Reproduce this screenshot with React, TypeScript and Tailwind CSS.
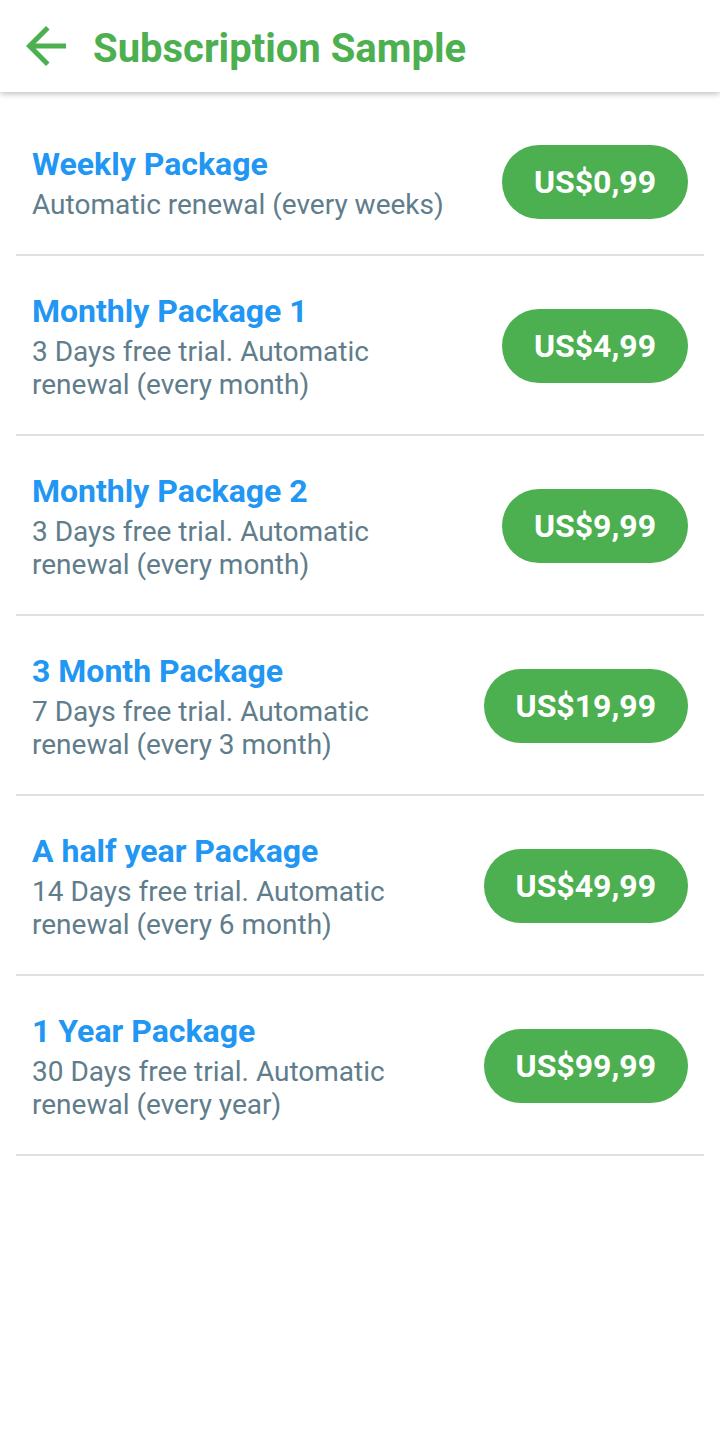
const packages = [
  {
    name: "Weekly Package",
    description: "Automatic renewal (every weeks)",
    price: "US$0,99",
  },
  {
    name: "Monthly Package 1",
    description: "3 Days free trial. Automatic renewal (every month)",
    price: "US$4,99",
  },
  {
    name: "Monthly Package 2",
    description: "3 Days free trial. Automatic renewal (every month)",
    price: "US$9,99",
  },
  {
    name: "3 Month Package",
    description: "7 Days free trial. Automatic renewal (every 3 month)",
    price: "US$19,99",
  },
  {
    name: "A half year Package",
    description: "14 Days free trial. Automatic renewal (every 6 month)",
    price: "US$49,99",
  },
  {
    name: "1 Year Package",
    description: "30 Days free trial. Automatic renewal (every year)",
    price: "US$99,99",
  },
];

function BackArrow() {
  return (
    <svg viewBox="0 0 24 24" className="w-[60px] h-[60px]" fill="#4CAF50">
      <path d="M20 11H7.83l5.59-5.59L12 4l-8 8 8 8 1.41-1.41L7.83 13H20v-2z" />
    </svg>
  );
}

export default function App() {
  return (
    <div
      className="min-h-[1440px] w-[720px] bg-white"
      style={{ fontFamily: "Roboto, 'Noto Sans', sans-serif" }}
    >
      <header className="relative z-10 h-[92px] flex items-center pl-4 bg-white shadow-[0_2px_6px_rgba(0,0,0,0.25)]">
        <BackArrow />
        <h1 className="ml-[17px] mt-[5px] text-[40px] font-bold text-[#4CAF50] leading-none">
          Subscription Sample
        </h1>
      </header>

      <ul className="pt-[17px]">
        {packages.map((pkg) => (
          <li
            key={pkg.name}
            className="mx-4 px-4 pt-9 pb-[33px] flex items-center justify-between border-b-2 border-[#e0e0e0]"
          >
            <div className="flex flex-col max-w-[425px]">
              <span className="text-[32px] leading-[38px] font-bold text-[#2196F3]">
                {pkg.name}
              </span>
              <span className="mt-[5px] text-[28px] leading-[33px] text-[#607D8B]">
                {pkg.description}
              </span>
            </div>
            <button className="h-[74px] px-8 -translate-y-px rounded-full bg-[#4CAF50] text-white text-[32px] font-bold">
              {pkg.price}
            </button>
          </li>
        ))}
      </ul>
    </div>
  );
}
